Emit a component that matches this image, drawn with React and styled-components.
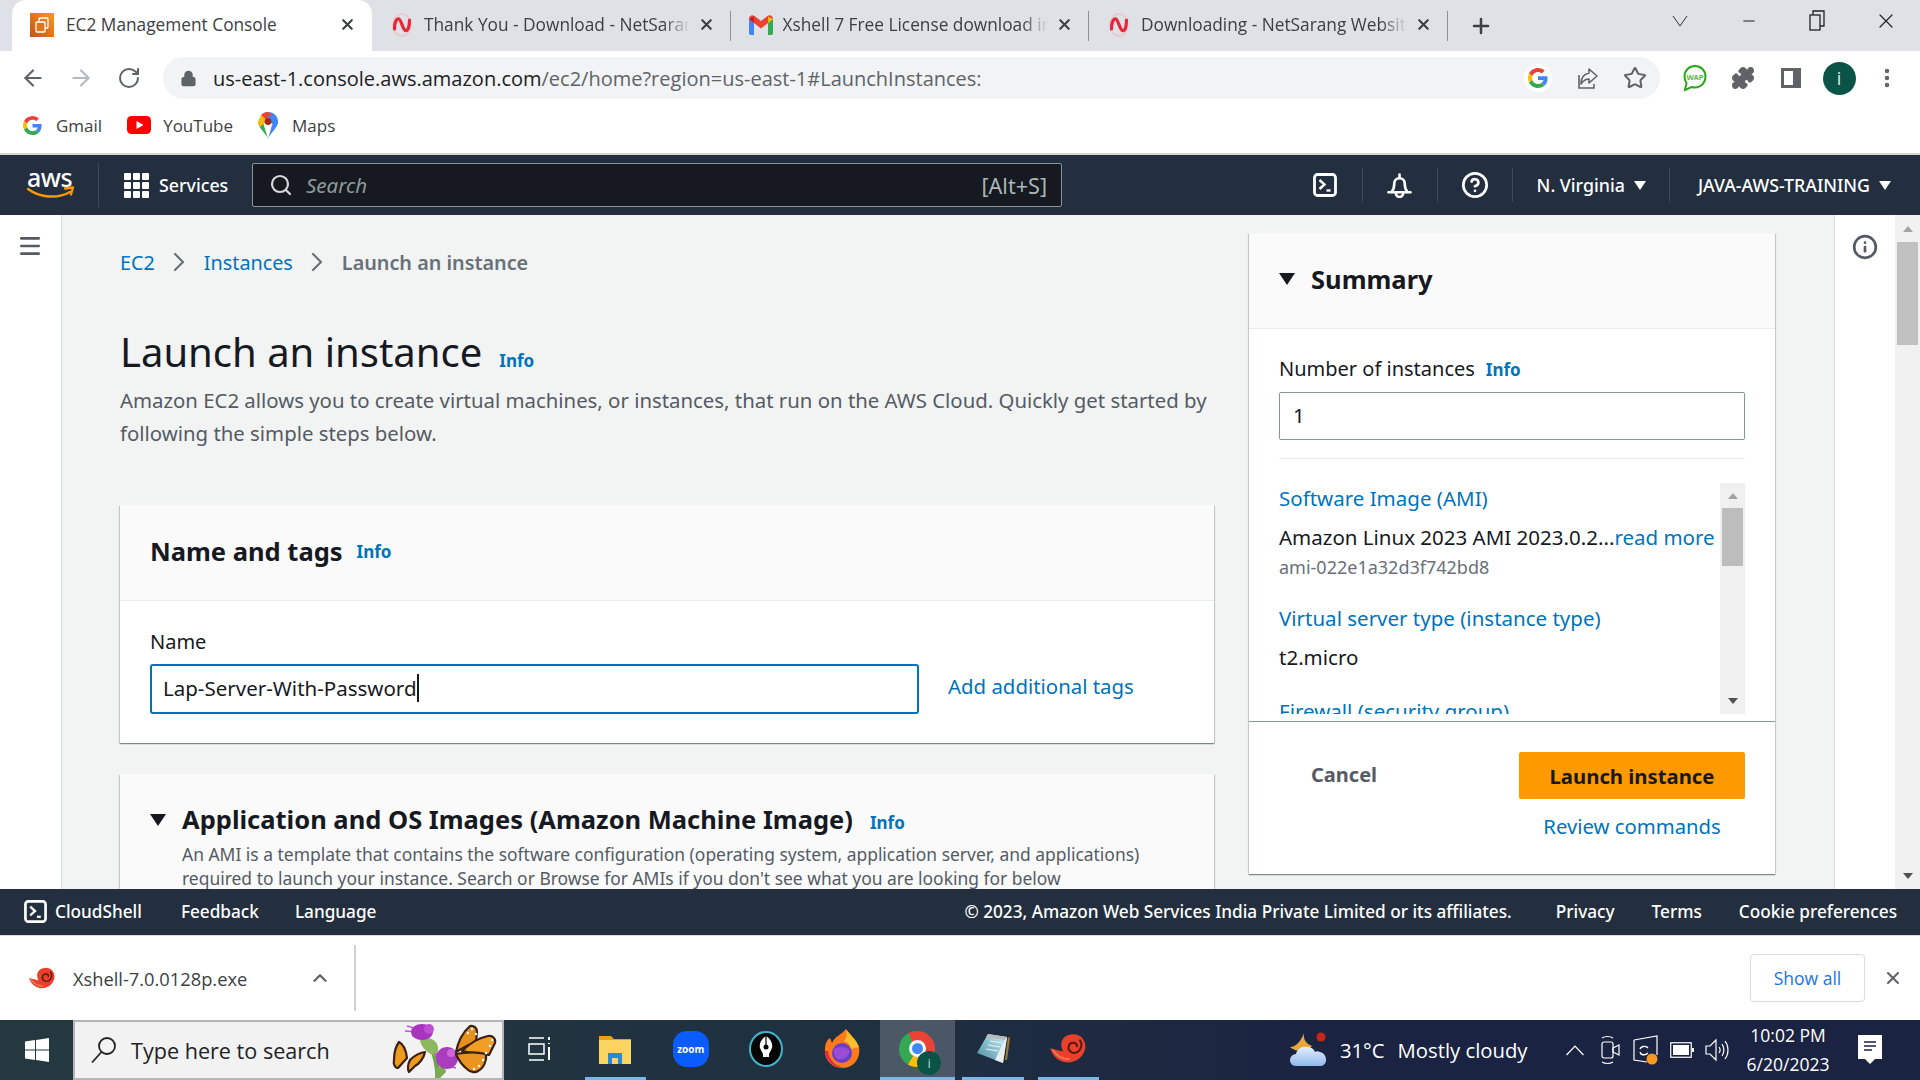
import React from 'react';
import styled, { createGlobalStyle } from 'styled-components';
import {
  ArrowLeft, ArrowRight, RotateCw, Lock, Star, Puzzle, MoreVertical, Search, X, Plus,
  ChevronUp, ChevronRight, Minus, Menu, Info as InfoIcon, HelpCircle,
} from 'lucide-react';

const GlobalStyle = createGlobalStyle`
  html, body { margin: 0; padding: 0; width: 1920px; height: 1080px; overflow: hidden; }
  * { box-sizing: border-box; }
  body { font-family: "Noto Sans", "Open Sans", sans-serif; }
`;

const chromeFont = `"Open Sans", "Noto Sans", sans-serif`;

const Page = styled.div`
  width: 1920px;
  height: 1080px;
  display: flex;
  flex-direction: column;
  overflow: hidden;
  background: #fff;
`;

/* browser chrome */
const TabStrip = styled.div`
  height: 51px;
  flex: none;
  background: #dee1e6;
  display: flex;
  align-items: flex-end;
  padding-left: 12px;
  font-family: ${chromeFont};
`;
const Tab = styled.div`
  width: ${(p) => (p.$active ? 360 : 358.5)}px;
  height: 51px;
  display: flex;
  align-items: center;
  gap: ${(p) => (p.$active ? 12 : 10)}px;
  padding: 0 16px 2px 18px;
  background: ${(p) => (p.$active ? '#fff' : 'transparent')};
  border-radius: ${(p) => (p.$active ? '14px 14px 0 0' : '0')};
  position: relative;
  color: #3c4043;
  &::after {
    content: '';
    display: ${(p) => (p.$sep ? 'block' : 'none')};
    position: absolute;
    right: 0;
    top: 11px;
    height: 30px;
    width: 1px;
    background: #8f9298;
  }
`;
const TabTitle = styled.div`
  flex: 1;
  min-width: 0;
  font-size: 17.3px;
  white-space: nowrap;
  overflow: hidden;
  margin-right: ${(p) => (p.$fade ? -2 : 0)}px;
  -webkit-mask-image: ${(p) => (p.$fade ? 'linear-gradient(to right, #000 90%, transparent)' : 'none')};
  mask-image: ${(p) => (p.$fade ? 'linear-gradient(to right, #000 90%, transparent)' : 'none')};
`;
const NewTab = styled.div`
  width: 66px;
  height: 51px;
  display: flex;
  align-items: center;
  justify-content: center;
  color: #3c4043;
`;
const WindowControls = styled.div`
  margin-left: auto;
  height: 51px;
  display: flex;
  align-items: center;
  padding: 0 0 10px;
  color: #202124;
`;
const WinButton = styled.div`
  width: 68.5px;
  display: flex;
  justify-content: center;
`;
const Toolbar = styled.div`
  height: 54px;
  flex: none;
  display: flex;
  align-items: center;
  padding-left: 9px;
  color: #5f6368;
  font-family: ${chromeFont};
`;
const ToolButton = styled.div`
  width: 48px;
  height: 30px;
  flex: none;
  display: flex;
  align-items: center;
  justify-content: center;
  color: ${(p) => (p.$off ? '#b8babd' : '#5f6368')};
`;
const Omnibox = styled.div`
  width: 1497px;
  height: 42px;
  margin: 0 0 0 10px;
  flex: none;
  background: #f1f3f4;
  border-radius: 21px;
  display: flex;
  align-items: center;
  padding: 0 0 0 17px;
  gap: 16px;
`;
const Url = styled.div`
  flex: 1;
  font-size: 20px;
  color: #5f6368;
  white-space: nowrap;
  b { font-weight: 400; color: #202124; }
`;
const OmniIcons = styled.div`
  display: flex;
  align-items: center;
  gap: 23.5px;
  padding-right: 13px;
`;
const GoogleDisc = styled.div`
  width: 28px;
  height: 28px;
  display: flex;
  align-items: center;
  justify-content: center;
  background: #fff;
  border-radius: 50%;
`;
const ExtIcons = styled.div`
  display: flex;
  align-items: center;
  gap: 0;
  margin-left: 11px;
`;
const ExtSlot = styled.div`
  width: 48px;
  display: flex;
  justify-content: center;
  align-items: center;
`;
const Avatar = styled.div`
  width: 33px;
  height: 33px;
  border-radius: 50%;
  background: #0a5447;
  color: #dfeeea;
  display: flex;
  align-items: center;
  justify-content: center;
  font-size: 18px;
`;
const Bookmarks = styled.div`
  height: 48px;
  flex: none;
  display: flex;
  align-items: center;
  padding: 0 0 8px 23px;
  gap: 25px;
  font-family: ${chromeFont};
`;
const Bookmark = styled.div`
  display: flex;
  align-items: center;
  gap: ${(p) => p.$gap || 14}px;
  font-size: 17px;
  color: #3c4043;
`;
const ChromeRule = styled.div`
  height: 2px;
  flex: none;
  background: #d4d4d4;
`;

/* aws nav */
const AwsNav = styled.div`
  height: 60px;
  flex: none;
  background: #232f3e;
  display: flex;
  align-items: center;
  color: #fff;
  font-size: 17.8px;
`;
const AwsLogo = styled.div`
  width: 99px;
  height: 44px;
  padding-left: 27px;
  border-right: 1px solid #3c4856;
  display: flex;
  flex-direction: column;
  justify-content: center;
`;
const AwsWord = styled.span`
  font-size: 25px;
  line-height: 20px;
  font-weight: 500;
  letter-spacing: -0.5px;
  margin-top: -4px;
`;
const ServicesBtn = styled.div`
  display: flex;
  align-items: center;
  gap: 10px;
  width: 153px;
  padding-left: 25px;
  font-weight: 500;
`;
const GridDots = styled.div`
  display: grid;
  grid-template-columns: repeat(3, 7px);
  grid-auto-rows: 7px;
  gap: 2px;
  i { background: #fff; border-radius: 1px; display: block; }
`;
const SearchBox = styled.div`
  width: 810px;
  height: 44px;
  background: #16191f;
  border: 1px solid #879596;
  border-radius: 2px;
  display: flex;
  align-items: center;
  padding: 0 14px 0 16px;
  gap: 13px;
  color: #d5dbdb;
`;
const SearchHint = styled.span`
  flex: 1;
  font-style: italic;
  font-size: 20.5px;
  color: #8d9a9e;
`;
const Shortcut = styled.span`
  font-size: 21.6px;
  color: #aab7b8;
`;
const NavRight = styled.div`
  margin-left: auto;
  display: flex;
  align-items: center;
  height: 44px;
  padding-right: 29px;
`;
const NavIcon = styled.div`
  width: 75px;
  height: 34px;
  display: flex;
  align-items: center;
  justify-content: center;
  border-right: 1px solid #3c4856;
`;
const NavMenu = styled.div`
  display: flex;
  align-items: center;
  height: 34px;
  gap: 9px;
  padding: 0 ${(p) => p.$right}px 0 ${(p) => p.$left}px;
  border-right: ${(p) => (p.$last ? '0' : '1px solid #3c4856')};
  font-weight: 500;
  white-space: nowrap;
`;
const Caret = styled.span`
  width: 0;
  height: 0;
  border-left: ${(p) => p.$size || 6}px solid transparent;
  border-right: ${(p) => p.$size || 6}px solid transparent;
  border-top: ${(p) => (p.$size || 6) * 1.5}px solid ${(p) => p.$color || '#fff'};
  flex: none;
`;

/* main console area */
const Main = styled.div`
  flex: 1;
  min-height: 0;
  display: flex;
  background: #f2f3f3;
  overflow: hidden;
`;
const SideRail = styled.div`
  width: 62px;
  flex: none;
  background: #fff;
  border-right: 1px solid #d5dbdb;
  padding: 18px 0 0 17px;
  color: #545b64;
`;
const Content = styled.div`
  width: 1152px;
  flex: none;
  padding: 33px 0 0 58px;
  color: #16191f;
`;
const Crumbs = styled.div`
  display: flex;
  align-items: center;
  height: 28px;
  font-size: 19.8px;
  color: #687078;
  a { color: #0073bb; }
  strong { font-weight: 600; color: #687078; }
`;
const CrumbGap = styled.span`
  width: 49px;
  display: flex;
  justify-content: center;
  color: #687078;
`;
const TitleRow = styled.div`
  display: flex;
  align-items: baseline;
  gap: 17px;
  margin-top: 47px;
`;
const PageTitle = styled.h1`
  margin: 0;
  font-size: 40px;
  line-height: 58px;
  font-weight: 400;
  color: #16191f;
`;
const InfoLink = styled.a`
  font-size: 17px;
  font-weight: 700;
  color: #0073bb;
`;
const Intro = styled.p`
  margin: 3px 0 0;
  width: 1100px;
  font-size: 20.38px;
  line-height: 33px;
  color: #545b64;
  white-space: pre-line;
`;
const Card = styled.section`
  width: 1094px;
  background: #fff;
  box-shadow: 0 1px 1px 0 rgba(0, 28, 36, 0.3), 1px 1px 1px 0 rgba(0, 28, 36, 0.15), -1px 1px 1px 0 rgba(0, 28, 36, 0.15);
  margin-top: ${(p) => p.$top}px;
`;
const CardHead = styled.header`
  background: #fafafa;
  border-bottom: ${(p) => (p.$flush ? '0' : '1px solid #eaeded')};
  padding: ${(p) => (p.$flush ? '26px 30px 0 30px' : '0 30px 3px')};
  height: ${(p) => (p.$flush ? 'auto' : '96px')};
  display: flex;
  align-items: ${(p) => (p.$flush ? 'flex-start' : 'center')};
  gap: ${(p) => (p.$flush ? 17 : 14)}px;
`;
const CardTitle = styled.h2`
  margin: 0;
  font-size: 25.5px;
  line-height: 38px;
  font-weight: 700;
  color: #16191f;
  white-space: nowrap;
`;
const TitleLine = styled.div`
  display: flex;
  align-items: baseline;
  gap: 17px;
`;
const Triangle = styled.div`
  padding-top: 26px;
  margin-right: -1px;
`;
const CardDesc = styled.p`
  margin: 4px 0 0;
  font-size: 17.45px;
  line-height: 24px;
  color: #545b64;
  white-space: pre;
`;
const CardBody = styled.div`
  padding: 27px 30px 29px;
`;
const FieldLabel = styled.label`
  display: block;
  font-size: 20px;
  line-height: 28px;
  color: #16191f;
`;
const NameRow = styled.div`
  display: flex;
  align-items: center;
  gap: 29px;
  margin-top: 8px;
`;
const NameInput = styled.div`
  width: 769px;
  height: 50px;
  border: 2.5px solid #0073bb;
  border-radius: 3px;
  display: flex;
  align-items: center;
  padding: 0 0 2px 11px;
  font-size: 20.5px;
  color: #16191f;
  background: #fff;
`;
const TextCaret = styled.span`
  width: 2px;
  height: 28px;
  background: #16191f;
`;
const TagsLink = styled.a`
  font-size: 20.4px;
  color: #0073bb;
  margin-top: -6px;
`;

/* summary */
const Summary = styled.aside`
  width: 526px;
  height: 641px;
  flex: none;
  margin: 18px 0 0 35px;
  background: #fff;
  box-shadow: 0 1px 1px 0 rgba(0, 28, 36, 0.3), 1px 1px 1px 0 rgba(0, 28, 36, 0.15), -1px 1px 1px 0 rgba(0, 28, 36, 0.15);
  display: flex;
  flex-direction: column;
  color: #16191f;
`;
const SummaryHead = styled.header`
  height: 96px;
  flex: none;
  background: #fafafa;
  border-bottom: 1px solid #eaeded;
  display: flex;
  align-items: center;
  gap: 16px;
  padding: 0 30px 3px;
`;
const SummaryBody = styled.div`
  padding: 26px 30px 0;
`;
const SummaryLabel = styled.div`
  display: flex;
  align-items: baseline;
  gap: 11px;
  font-size: 20px;
  line-height: 28px;
`;
const NumberInput = styled.div`
  height: 48px;
  border: 1px solid #879596;
  border-radius: 2px;
  margin-top: 8px;
  padding: 0 0 2px 13px;
  display: flex;
  align-items: center;
  font-size: 20.5px;
  color: #16191f;
`;
const Rule = styled.div`
  height: 1px;
  background: #eaeded;
  margin-top: 18px;
`;
const ScrollArea = styled.div`
  height: 231px;
  margin-top: 24px;
  display: flex;
  overflow: hidden;
`;
const ScrollText = styled.div`
  flex: 1;
  min-width: 0;
  overflow: hidden;
  font-size: 20px;
`;
const SummaryLink = styled.a`
  display: block;
  color: #0073bb;
  font-size: 20.5px;
  line-height: 30px;
`;
const SummaryLine = styled.div`
  font-size: 20.5px;
  line-height: 30px;
  margin-top: 9px;
  white-space: nowrap;
  a { color: #0073bb; }
`;
const SummaryId = styled.div`
  font-size: 18px;
  line-height: 24px;
  color: #687078;
  margin: 3px 0 24px;
`;
const MiniScroll = styled.div`
  width: 25px;
  flex: none;
  background: #f0f0f0;
  display: flex;
  flex-direction: column;
  align-items: center;
  padding-top: 10px;
`;
const MiniThumb = styled.div`
  width: 21px;
  height: 58px;
  background: #bdbdbd;
  margin-top: 9px;
`;
const ArrowUp = styled.span`
  width: 0;
  height: 0;
  border-left: 5px solid transparent;
  border-right: 5px solid transparent;
  border-bottom: 6px solid #a3a3a3;
`;
const ArrowDown = styled.span`
  width: 0;
  height: 0;
  border-left: 5px solid transparent;
  border-right: 5px solid transparent;
  border-top: 6px solid #505050;
  margin-top: auto;
  margin-bottom: 10px;
`;
const SummaryFoot = styled.div`
  border-top: 1px solid #879596;
  margin-top: 7px;
  padding: 30px 30px 0;
  display: grid;
  grid-template-columns: 1fr 226px;
  row-gap: 11px;
`;
const CancelBtn = styled.div`
  font-size: 20px;
  font-weight: 700;
  color: #545b64;
  padding-left: 32px;
  line-height: 45px;
`;
const LaunchBtn = styled.div`
  height: 47px;
  background: #ff9900;
  border-radius: 2px;
  font-size: 20.3px;
  font-weight: 700;
  color: #16191f;
  display: flex;
  align-items: center;
  justify-content: center;
`;
const ReviewLink = styled.a`
  grid-column: 2;
  text-align: center;
  color: #0073bb;
  font-size: 20.3px;
  line-height: 32px;
`;
const InfoRail = styled.div`
  width: 61px;
  flex: none;
  margin-left: 59px;
  background: #fff;
  border-left: 1px solid #d5dbdb;
  display: flex;
  justify-content: center;
  padding-top: 19px;
  color: #545b64;
`;
const PageScroll = styled.div`
  width: 25px;
  flex: none;
  background: #f1f1f1;
  display: flex;
  flex-direction: column;
  align-items: center;
  padding-top: 11px;
`;
const PageThumb = styled.div`
  width: 21px;
  height: 103px;
  background: #c1c1c1;
  margin-top: 10px;
`;

/* console footer */
const ConsoleFooter = styled.footer`
  height: 46px;
  flex: none;
  background: #232f3e;
  color: #fff;
  display: flex;
  align-items: center;
  font-size: 17.2px;
  font-weight: 500;
  padding: 0 23px 1px 24px;
  white-space: nowrap;
`;
const ShellLink = styled.span`
  display: flex;
  align-items: center;
  gap: 8px;
  margin-right: 39px;
`;
const FootLinks = styled.div`
  display: flex;
  gap: 36px;
`;
const FootRight = styled.div`
  margin-left: auto;
  display: flex;
  gap: 37px;
  span:first-child { margin-right: 7px; }
`;

/* downloads shelf */
const Shelf = styled.div`
  height: 85px;
  flex: none;
  background: #fff;
  display: flex;
  align-items: center;
  font-family: ${chromeFont};
  border-top: 1px solid #dadce0;
`;
const ShelfItem = styled.div`
  width: 356px;
  height: 66px;
  flex: none;
  display: flex;
  align-items: center;
  padding-left: 29px;
  gap: 18px;
  font-size: 18.3px;
  color: #3c4043;
  border-right: 2px solid #d0d0d0;
  span { flex: 1; }
  svg:last-child { margin-right: 23px; color: #5f6368; }
`;
const ShowAll = styled.div`
  margin-left: auto;
  width: 115px;
  height: 48px;
  border: 1px solid #dadce0;
  border-radius: 4px;
  display: flex;
  align-items: center;
  justify-content: center;
  font-size: 17.5px;
  color: #1a73e8;
`;
const ShelfClose = styled.div`
  width: 55px;
  display: flex;
  justify-content: center;
  color: #5f6368;
`;

/* windows taskbar */
const Taskbar = styled.div`
  height: 60px;
  flex: none;
  background: linear-gradient(90deg, #24393f 0%, #1f3040 45%, #1a2341 70%, #1a2341 100%);
  display: flex;
  align-items: stretch;
  color: #fff;
  font-family: ${chromeFont};
`;
const StartBtn = styled.div`
  width: 73px;
  display: flex;
  align-items: center;
  justify-content: center;
`;
const TaskSearch = styled.div`
  width: 431px;
  background: #f2f2f2;
  border: 2px solid #b5b5b5;
  display: flex;
  align-items: center;
  padding-left: 15px;
  gap: 13px;
  color: #222;
  font-size: 21.6px;
  span { flex: 1; white-space: nowrap; }
`;
const TaskIcons = styled.div`
  display: flex;
  margin-left: -2px;
`;
const TaskItem = styled.div`
  width: 75.5px;
  display: flex;
  align-items: center;
  justify-content: center;
  position: relative;
  padding-bottom: 3px;
  background: ${(p) => (p.$active ? 'rgba(255,255,255,0.2)' : 'transparent')};
  &::after {
    content: '';
    display: ${(p) => (p.$running ? 'block' : 'none')};
    position: absolute;
    left: ${(p) => (p.$active ? 0 : 7)}px;
    right: ${(p) => (p.$active ? 0 : 7)}px;
    bottom: 0;
    height: 3px;
    background: #76b9ed;
  }
`;
const ZoomBadge = styled.div`
  width: 36px;
  height: 36px;
  border-radius: 14px;
  background: #0b5cff;
  color: #fff;
  font-size: 10px;
  font-weight: 700;
  display: flex;
  align-items: center;
  justify-content: center;
`;
const ChromeLogo = styled.div`
  width: 36px;
  height: 36px;
  border-radius: 50%;
  background: conic-gradient(#ea4335 0 120deg, #fbbc05 120deg 210deg, #34a853 210deg 330deg, #ea4335 330deg);
  display: flex;
  align-items: center;
  justify-content: center;
  position: relative;
`;
const ChromeEye = styled.div`
  width: 17px;
  height: 17px;
  background: #4285f4;
  border: 3px solid #fff;
  border-radius: 50%;
`;
const ChromeUser = styled.div`
  position: absolute;
  right: -6px;
  bottom: -8px;
  width: 24px;
  height: 24px;
  border-radius: 50%;
  background: #0a5447;
  color: #b9d6cf;
  font-size: 13px;
  text-align: center;
  line-height: 24px;
`;
const Tray = styled.div`
  margin-left: auto;
  display: flex;
  align-items: center;
  padding-right: 21px;
`;
const Weather = styled.div`
  display: flex;
  align-items: center;
  font-size: 20.3px;
  margin-right: 30px;
  white-space: nowrap;
  svg { margin-right: 12px; }
  span + span { margin-left: 13px; }
`;
const TraySlot = styled.div`
  width: 35.5px;
  display: flex;
  justify-content: center;
`;
const Clock = styled.div`
  width: 106px;
  text-align: center;
  font-size: 17.5px;
  line-height: 29px;
`;
const Notify = styled.div`
  width: 58px;
  display: flex;
  justify-content: center;
`;

const GoogleG = ({ size = 20 }) => (
  <svg width={size} height={size} viewBox="0 0 48 48">
    <path fill="#EA4335" d="M24 9.5c3.54 0 6.71 1.22 9.21 3.6l6.85-6.85C35.9 2.38 30.47 0 24 0 14.62 0 6.51 5.38 2.56 13.22l7.98 6.19C12.43 13.72 17.74 9.5 24 9.5z" />
    <path fill="#4285F4" d="M46.98 24.55c0-1.57-.15-3.09-.38-4.55H24v9.02h12.94c-.58 2.96-2.26 5.48-4.78 7.18l7.73 6c4.51-4.18 7.09-10.36 7.09-17.65z" />
    <path fill="#FBBC05" d="M10.53 28.59c-.48-1.45-.76-2.99-.76-4.59s.27-3.14.76-4.59l-7.98-6.19C.92 16.46 0 20.12 0 24c0 3.88.92 7.54 2.56 10.78l7.97-6.19z" />
    <path fill="#34A853" d="M24 48c6.48 0 11.93-2.13 15.89-5.81l-7.73-6c-2.15 1.45-4.92 2.3-8.16 2.3-6.26 0-11.57-4.22-13.47-9.91l-7.98 6.19C6.51 42.62 14.62 48 24 48z" />
  </svg>
);

const Ec2Icon = () => (
  <svg width="24" height="24" viewBox="0 0 24 24" style={{ flex: 'none' }}>
    <defs>
      <linearGradient id="ec2g" x1="0" y1="1" x2="1" y2="0">
        <stop offset="0" stopColor="#c8511b" />
        <stop offset="1" stopColor="#f7981f" />
      </linearGradient>
    </defs>
    <rect width="24" height="24" fill="url(#ec2g)" />
    <rect x="9" y="5" width="9" height="10" rx="1" fill="none" stroke="#fff" strokeWidth="1.3" />
    <rect x="6" y="9" width="9" height="10" rx="1" fill="#e2741f" stroke="#fff" strokeWidth="1.3" />
  </svg>
);

const NetSarang = () => (
  <svg width="24" height="24" viewBox="0 0 24 24" style={{ flex: 'none' }}>
    <ellipse cx="12" cy="12" rx="9" ry="11" fill="none" stroke="#eec6cc" strokeWidth="1.5" />
    <path d="M4.500 16C4.500 8 7 5 9 6c2.500 1.500 3.500 10 6.500 11.500C18 18.500 19.500 14 19.500 7" fill="none" stroke="#e8283a" strokeWidth="3.200" strokeLinecap="round" />
  </svg>
);

const GmailIcon = () => (
  <svg width="24" height="20" viewBox="0 0 24 20" style={{ flex: 'none' }}>
    <path d="M0 4v14c0 1 .7 2 2 2h3V8z" fill="#4285f4" />
    <path d="M24 4v14c0 1-.7 2-2 2h-3V8z" fill="#34a853" />
    <path d="M0 4c0-3 3-5 5.500-3L12 6l6.500-5C21-1 24 1 24 4l-5 4-7 5.500L5 8z" fill="#ea4335" />
    <path d="M19 1.500 24 4l-5 4z" fill="#fbbc05" />
    <path d="M0 4l5 4V1.500z" fill="#c5221f" />
  </svg>
);

const YouTubeIcon = () => (
  <svg width="24" height="18" viewBox="0 0 24 18">
    <rect width="24" height="18" rx="4.500" fill="#f00" />
    <path d="M9.500 5v8l7-4z" fill="#fff" />
  </svg>
);

const MapsIcon = () => (
  <svg width="20" height="27" viewBox="0 0 20 27">
    <path d="M10 27C8 21 0 16 0 9.500L4 7z" fill="#34a853" />
    <path d="M10 27c2-6 10-11 10-17.500L14 13z" fill="#4285f4" />
    <path d="M16.500 2.200C18.800 4 20 6.500 20 9.500c0 2-1 3.800-2.500 5.700L4.500 2.700C6 1 8 0 10 0c2.600 0 4.700.8 6.500 2.200z" fill="#4285f4" />
    <path d="M3 3 0 9.500c0 2 .8 3.700 2 5.500l8-7z" fill="#fbbc05" />
    <path d="M10 0C7 0 4.800 1.200 3 3l4.500 4L14 2z" fill="#ea4335" />
    <circle cx="10" cy="9.500" r="3.400" fill="#a52714" />
  </svg>
);

const ShareIcon = () => (
  <svg width="24" height="24" viewBox="0 0 24 24" fill="none" stroke="#5f6368" strokeWidth="1.600">
    <path d="M3 9v13h15v-4" />
    <path d="M13 3l8 7-8 7v-4c-4 0-6 2-8 5 0-6 3-10 8-11z" strokeLinejoin="round" />
  </svg>
);

const WapIcon = () => (
  <svg width="24" height="28" viewBox="0 0 24 28">
    <path d="M12 2C6 2 1.500 6.500 1.500 12.500c0 2.500.7 4.500 2 6.500L2 26l6.500-3c1 .3 2.300.5 3.500.5 6 0 10.500-4.800 10.500-11S18 2 12 2z" fill="#fff" stroke="#2aa81a" strokeWidth="2" />
    <text x="12" y="15.500" textAnchor="middle" fontSize="7.500" fontWeight="700" fill="#5fb34f" fontFamily="Noto Sans, sans-serif">WAP</text>
  </svg>
);

const SidePanelIcon = () => (
  <svg width="22" height="22" viewBox="0 0 22 22">
    <path fillRule="evenodd" d="M1 1h20v20H1zM4 4h9v14H4z" fill="#5f6368" />
  </svg>
);

const SmileArrow = () => (
  <svg width="48" height="14" viewBox="0 0 48 14" fill="none" style={{ display: 'block', marginTop: -1 }}>
    <path d="M1 3c12 9 30 10 42 3" stroke="#ff9900" strokeWidth="2.500" strokeLinecap="round" />
    <path d="M38 2.500l8-1-2 7" stroke="#ff9900" strokeWidth="2.300" strokeLinecap="round" strokeLinejoin="round" />
  </svg>
);

const ShellIcon = ({ size = 24 }) => (
  <svg width={size} height={size} viewBox="0 0 24 24" fill="none" stroke="#fff">
    <rect x="1.500" y="1.500" width="21" height="21" rx="3" strokeWidth="2.800" />
    <path d="M6.500 7l5 4.500-5 4.500" strokeWidth="2.400" />
    <path d="M13.500 17.500h4" strokeWidth="2.400" />
  </svg>
);

const BellIcon = () => (
  <svg width="25" height="25" viewBox="0 0 24 24" fill="none" stroke="#fff" strokeWidth="2.500" strokeLinecap="round">
    <path d="M1.500 18.500h21" />
    <path d="M4.500 18c2-2.500 2.500-5 2.500-8a5 5 0 0 1 10 0c0 3 .5 5.500 2.500 8" />
    <path d="M8.500 19.500a3.500 3.500 0 0 0 7 0" />
    <path d="M12 1.500v3" />
  </svg>
);

const WindowsLogo = () => (
  <svg width="24" height="24" viewBox="0 0 24 24" fill="#fff">
    <path d="M0 3.500 10 2v9.500H0zM11 1.900 24 0v11.500H11zM0 12.500h10V22L0 20.500zM11 12.500h13V24l-13-1.900z" />
  </svg>
);

const Lens = () => (
  <svg width="28" height="28" viewBox="0 0 28 28" fill="none" stroke="#222" strokeWidth="1.800" style={{ flex: 'none' }}>
    <circle cx="17" cy="10" r="8" />
    <path d="M11.500 16 2 26.500" />
  </svg>
);

const Wing = ({ d, fill = '#ee9a1c' }) => (
  <path d={d} fill={fill} stroke="#3a2015" strokeWidth="2.200" strokeLinejoin="round" />
);

const Butterflies = () => (
  <svg width="120" height="56" viewBox="0 2 120 56" style={{ flex: 'none', marginRight: 2 }}>
    {/* thistle stems */}
    <path d="M52 28 C56 38 58 48 58 60" stroke="#6da24a" strokeWidth="5" fill="none" />
    <path d="M40 20c6-3 14-2 17 4 2 5 1 9-2 12-6-2-14-8-15-16z" fill="#8db85f" />
    <path d="M56 48c5-3 10 0 10 4l-6 6h-5z" fill="#7dab52" />
    {/* flower heads */}
    <path d="M25 11 L38 12 M27 6 L38 9 M32 16 L40 14 M60 44 L76 48 M54 34 L64 36 M56 42 L62 38" stroke="#c553d8" strokeWidth="1.500" />
    <ellipse cx="42" cy="12" rx="11" ry="8" fill="#a635bd" />
    <circle cx="49" cy="9" r="5" fill="#c04ed6" />
    <circle cx="67" cy="38" r="11" fill="#a93dbd" />
    <circle cx="71" cy="33" r="4" fill="#cf66e0" />
    {/* small butterfly */}
    <Wing d="M19 22c4 2 7 8 8 16l-9 10c-3 0-5-4-4-8 0-8 2-14 5-18z" />
    <Wing d="M30 40c3-3 9-7 15-8-1 6-6 12-10 14l-6 6c-2-4-1-8 1-12z" />
    {/* big butterfly */}
    <Wing d="M76 32c2-10 7-20 14-26 4-1 7 2 7 6l-1 10c-6 2-14 6-20 10z" fill="#e8901a" />
    <Wing d="M82 31c6-6 16-13 26-15 5-1 8 3 7 7l-6 12c-8-1-18-2-27-4z" fill="#f29e24" />
    <Wing d="M76 34c10-2 22-2 30 0 1 6-2 14-8 17-3 2-8 1-11-2-5-4-9-10-11-15z" fill="#ec9420" />
    <path d="M92 9h0M96 14h0M88 13h0M112 20h0M110 26h0M106 33h0M103 40h0M99 46h0M94 49h0" stroke="#fff" strokeWidth="2.500" strokeLinecap="round" />
  </svg>
);

const TaskView = () => (
  <svg width="24" height="28" viewBox="0 0 24 28" fill="none" stroke="#fff" strokeWidth="1.500">
    <path d="M1 3h15M1 25h15M1 9h15v10H1z" />
    <path d="M21 2v3M21 8v1M21 12v13" strokeWidth="2" />
  </svg>
);

const ExplorerIcon = () => (
  <svg width="32" height="30" viewBox="0 0 32 30">
    <path d="M0 2h12l3 3h17v5H0z" fill="#e4a11b" />
    <rect y="6" width="32" height="24" fill="#fcd462" />
    <path d="M9 30V19h14v11h-4v-6h-6v6z" fill="#2b88d8" />
  </svg>
);

const PenIcon = () => (
  <svg width="34" height="36" viewBox="0 0 34 36">
    <ellipse cx="17" cy="18" rx="16" ry="17" fill="#050505" stroke="#3fb5cc" strokeWidth="2" />
    <path d="M17 5c5 3 7 8 6 12l-3 6v3h-6v-3l-3-6c-1-4 1-9 6-12z" fill="#fff" />
    <circle cx="17" cy="16" r="2.500" fill="#050505" />
    <path d="M17 5v9" stroke="#050505" strokeWidth="1.200" />
  </svg>
);

const FirefoxIcon = () => (
  <svg width="36" height="40" viewBox="0 0 36 40">
    <path d="M22 0c3 5 10 10 13 18 2 12-6 21-17 21C8 39 0 31 1 20c0-5 2-9 5-11l2 5c3-7 9-8 14-14z" fill="#ff7a1a" />
    <path d="M22 0c3 5 10 10 13 18l-8 2c-1-4-2-6-7-8 3-3 3-8 2-12z" fill="#ffbd2e" />
    <circle cx="18" cy="24" r="10" fill="#6a3fc4" />
    <path d="M10 20c4-3 12-3 16 2-2 6-6 9-12 8-3-1-5-6-4-10z" fill="#9a4bd8" />
    <path d="M1 22c1 10 9 17 19 17-8-2-15-7-16-17z" fill="#e5234d" />
  </svg>
);

const NotepadIcon = () => (
  <svg width="34" height="32" viewBox="0 0 34 32">
    <defs>
      <linearGradient id="padg" x1="0" y1="1" x2="1" y2="0">
        <stop offset="0" stopColor="#3f8ba0" />
        <stop offset="1" stopColor="#d4eef5" />
      </linearGradient>
    </defs>
    <path d="M32 4l2 1-3 22-2 0z" fill="#a5782a" />
    <path d="M12 1l19 3-4 26L1 20z" fill="url(#padg)" />
    <path d="M12 1l19 3-1 3-20-3z" fill="#b8b8b8" />
    <path d="M27 10l4-6-4 26-8-3z" fill="#e8eef0" />
    <path d="M14 8l12 2M12 12l12 2M10 16l12 2" stroke="#e6f5f9" strokeWidth="1" />
  </svg>
);

const XshellIcon = ({ size = 36 }) => (
  <svg width={size} height={size * 0.85} viewBox="0 0 36 30" fill="none">
    <path d="M0 15c6 1 10 3 13 3C9 10 12 2 22 1c9-1 15 7 13 15-2 9-11 14-19 13C8 28 3 23 0 15z" fill="#e8402a" />
    <path d="M3 17c4 6 9 9 16 9" stroke="#f4735a" strokeWidth="2" strokeLinecap="round" />
    <path d="M27 13c0-4-6-5-8-1-2 5 3 9 8 7 4-2 6-8 3-12" stroke="#5a1610" strokeWidth="2" strokeLinecap="round" />
  </svg>
);

const WeatherIcon = () => (
  <svg width="38" height="36" viewBox="0 0 38 36">
    <defs>
      <linearGradient id="cloudg" x1="0" y1="0" x2="0" y2="1">
        <stop offset="0" stopColor="#e4eefb" />
        <stop offset="1" stopColor="#8fb9ee" />
      </linearGradient>
    </defs>
    <path d="M14 1c-1 6 2 11 8 13-4 5-12 6-17 4 0 0-4-2-5-3 6 0 11-6 14-14z" fill="#e9a63a" />
    <circle cx="31" cy="5" r="4.500" fill="#c9261a" />
    <path d="M6 34c-4 0-6-3-6-6s3-6 6-6c1-5 6-8 11-7 4 0 7 2 8 5 1-1 3-1 5 0 4 1 6 4 6 8s-3 6-6 6z" fill="url(#cloudg)" />
  </svg>
);

const TrayMeet = () => (
  <svg width="20" height="34" viewBox="0 0 20 34" fill="none" stroke="#fff" strokeWidth="1.200">
    <rect x="1" y="9" width="11" height="16" rx="2" />
    <path d="M12 15l6-3v10l-6-3zM1 5c3-2 8-2 11 0M1 29c3 2 8 2 11 0" />
  </svg>
);

const TrayUpdate = () => (
  <svg width="26" height="36" viewBox="0 0 26 36" fill="none" stroke="#fff" strokeWidth="1.200">
    <path d="M1 8l23-4v19M1 8v20l13 2" />
    <path d="M7 17c1-3 5-3 7-2l1 1M15 21c-2 2-5 2-7 1l-1-2" strokeWidth="1.400" />
    <circle cx="19" cy="27" r="5.500" fill="#f7981f" stroke="none" />
  </svg>
);

const TrayBattery = () => (
  <svg width="24" height="16" viewBox="0 0 24 16">
    <rect x="0.750" y="0.750" width="20.500" height="14.500" fill="none" stroke="#fff" strokeWidth="1.200" />
    <rect x="3" y="3" width="16" height="10" fill="#fff" />
    <rect x="22" y="6" width="2" height="4" fill="#fff" />
  </svg>
);

const TrayVolume = () => (
  <svg width="24" height="26" viewBox="0 0 24 26" fill="none" stroke="#fff" strokeWidth="1.200">
    <path d="M1 9h4l6-6v20l-6-6H1zM14 10c1.500 2 1.500 4 0 6M17 7c2.500 4 2.500 8 0 12M20 4c4 5 4 13 0 18" />
  </svg>
);

const TrayChevron = () => (
  <svg width="20" height="12" viewBox="0 0 20 12" fill="none" stroke="#fff" strokeWidth="1.200">
    <path d="M1.500 11 10 2l8.500 9" />
  </svg>
);

const ActionCenter = () => (
  <svg width="24" height="30" viewBox="0 0 24 30">
    <path d="M0 0h24v24h-7l-5 5-5-5H0z" fill="#fff" />
    <path d="M6 7h12M6 11h12M6 15h8" stroke="#1a2341" strokeWidth="1.500" />
  </svg>
);

const ThinChevron = () => (
  <svg width="20" height="14" viewBox="0 0 20 14" fill="none" stroke="#333" strokeWidth="1">
    <path d="M3 2l7 10 7-10" />
  </svg>
);

const RestoreIcon = () => (
  <svg width="16" height="22" viewBox="0 0 16 22" fill="none" stroke="#202124" strokeWidth="1.300">
    <rect x="1" y="5" width="10" height="15" />
    <path d="M4 5V1h11v15h-4" />
  </svg>
);

const tabs = [
  { title: 'Thank You - Download - NetSarang Website', icon: <NetSarang />, sep: true },
  { title: 'Xshell 7 Free License download instantly', icon: <GmailIcon />, sep: true },
  { title: 'Downloading - NetSarang Website', icon: <NetSarang />, sep: true },
];

const App = () => (
  <Page>
    <GlobalStyle />
    <TabStrip>
      <Tab $active>
        <Ec2Icon />
        <TabTitle>EC2 Management Console</TabTitle>
        <X size={17} strokeWidth={3} />
      </Tab>
      {tabs.map((t) => (
        <Tab key={t.title} $sep={t.sep}>
          {t.icon}
          <TabTitle $fade>{t.title}</TabTitle>
          <X size={17} strokeWidth={3} />
        </Tab>
      ))}
      <NewTab><Plus size={24} strokeWidth={2.5} /></NewTab>
      <WindowControls>
        <WinButton><ThinChevron /></WinButton>
        <WinButton><Minus size={18} strokeWidth={1.500} /></WinButton>
        <WinButton><RestoreIcon /></WinButton>
        <WinButton><X size={24} strokeWidth={1.200} /></WinButton>
      </WindowControls>
    </TabStrip>

    <Toolbar>
      <ToolButton><ArrowLeft size={26} strokeWidth={2} /></ToolButton>
      <ToolButton $off><ArrowRight size={26} strokeWidth={2} /></ToolButton>
      <ToolButton><RotateCw size={24} strokeWidth={2} /></ToolButton>
      <Omnibox>
        <Lock size={17} fill="#5f6368" strokeWidth={2} />
        <Url><b>us-east-1.console.aws.amazon.com</b>/ec2/home?region=us-east-1#LaunchInstances:</Url>
        <OmniIcons>
          <GoogleDisc><GoogleG size={20} /></GoogleDisc>
          <ShareIcon />
          <Star size={24} strokeWidth={2} />
        </OmniIcons>
      </Omnibox>
      <ExtIcons>
        <ExtSlot><WapIcon /></ExtSlot>
        <ExtSlot><Puzzle size={24} fill="#5f6368" /></ExtSlot>
        <ExtSlot><SidePanelIcon /></ExtSlot>
        <ExtSlot><Avatar>i</Avatar></ExtSlot>
        <ExtSlot><MoreVertical size={24} strokeWidth={2.500} /></ExtSlot>
      </ExtIcons>
    </Toolbar>

    <Bookmarks>
      <Bookmark><GoogleG size={19} />Gmail</Bookmark>
      <Bookmark $gap={12}><YouTubeIcon />YouTube</Bookmark>
      <Bookmark><MapsIcon />Maps</Bookmark>
    </Bookmarks>
    <ChromeRule />

    <AwsNav>
      <AwsLogo>
        <AwsWord>aws</AwsWord>
        <SmileArrow />
      </AwsLogo>
      <ServicesBtn>
        <GridDots>{Array.from({ length: 9 }, (_, i) => <i key={i} />)}</GridDots>
        Services
      </ServicesBtn>
      <SearchBox>
        <Search size={24} strokeWidth={2.200} />
        <SearchHint>Search</SearchHint>
        <Shortcut>[Alt+S]</Shortcut>
      </SearchBox>
      <NavRight>
        <NavIcon><ShellIcon /></NavIcon>
        <NavIcon><BellIcon /></NavIcon>
        <NavIcon><HelpCircle size={28} strokeWidth={2.300} /></NavIcon>
        <NavMenu $left={24} $right={23}>N. Virginia<Caret /></NavMenu>
        <NavMenu $left={28} $right={0} $last>JAVA-AWS-TRAINING<Caret /></NavMenu>
      </NavRight>
    </AwsNav>

    <Main>
      <SideRail><Menu size={26} strokeWidth={2.500} /></SideRail>
      <Content>
        <Crumbs>
          <a>EC2</a>
          <CrumbGap><ChevronRight size={32} strokeWidth={1.600} /></CrumbGap>
          <a>Instances</a>
          <CrumbGap><ChevronRight size={32} strokeWidth={1.600} /></CrumbGap>
          <strong>Launch an instance</strong>
        </Crumbs>
        <TitleRow>
          <PageTitle>Launch an instance</PageTitle>
          <InfoLink>Info</InfoLink>
        </TitleRow>
        <Intro>{'Amazon EC2 allows you to create virtual machines, or instances, that run on the AWS Cloud. Quickly get started by\nfollowing the simple steps below.'}</Intro>

        <Card $top={55}>
          <CardHead>
            <CardTitle>Name and tags</CardTitle>
            <InfoLink>Info</InfoLink>
          </CardHead>
          <CardBody>
            <FieldLabel>Name</FieldLabel>
            <NameRow>
              <NameInput>Lap-Server-With-Password<TextCaret /></NameInput>
              <TagsLink>Add additional tags</TagsLink>
            </NameRow>
          </CardBody>
        </Card>

        <Card $top={31}>
          <CardHead $flush>
            <Triangle><Caret $size={8} $color="#16191f" /></Triangle>
            <div>
              <TitleLine>
                <CardTitle>Application and OS Images (Amazon Machine Image)</CardTitle>
                <InfoLink>Info</InfoLink>
              </TitleLine>
              <CardDesc>{"An AMI is a template that contains the software configuration (operating system, application server, and applications)\nrequired to launch your instance. Search or Browse for AMIs if you don't see what you are looking for below"}</CardDesc>
            </div>
          </CardHead>
        </Card>
      </Content>

      <Summary>
        <SummaryHead>
          <Caret $size={8} $color="#16191f" />
          <CardTitle>Summary</CardTitle>
        </SummaryHead>
        <SummaryBody>
          <SummaryLabel>Number of instances <InfoLink>Info</InfoLink></SummaryLabel>
          <NumberInput>1</NumberInput>
          <Rule />
          <ScrollArea>
            <ScrollText>
              <SummaryLink>Software Image (AMI)</SummaryLink>
              <SummaryLine>Amazon Linux 2023 AMI 2023.0.2...<a>read more</a></SummaryLine>
              <SummaryId>ami-022e1a32d3f742bd8</SummaryId>
              <SummaryLink>Virtual server type (instance type)</SummaryLink>
              <SummaryLine>t2.micro</SummaryLine>
              <SummaryId />
              <SummaryLink>Firewall (security group)</SummaryLink>
            </ScrollText>
            <MiniScroll>
              <ArrowUp />
              <MiniThumb />
              <ArrowDown />
            </MiniScroll>
          </ScrollArea>
        </SummaryBody>
        <SummaryFoot>
          <CancelBtn>Cancel</CancelBtn>
          <LaunchBtn>Launch instance</LaunchBtn>
          <ReviewLink>Review commands</ReviewLink>
        </SummaryFoot>
      </Summary>

      <InfoRail><InfoIcon size={26} strokeWidth={2.500} /></InfoRail>
      <PageScroll>
        <ArrowUp />
        <PageThumb />
        <ArrowDown />
      </PageScroll>
    </Main>

    <ConsoleFooter>
      <ShellLink><ShellIcon size={23} />CloudShell</ShellLink>
      <FootLinks>
        <span>Feedback</span>
        <span>Language</span>
      </FootLinks>
      <FootRight>
        <span>© 2023, Amazon Web Services India Private Limited or its affiliates.</span>
        <span>Privacy</span>
        <span>Terms</span>
        <span>Cookie preferences</span>
      </FootRight>
    </ConsoleFooter>

    <Shelf>
      <ShelfItem>
        <XshellIcon size={26} />
        <span>Xshell-7.0.0128p.exe</span>
        <ChevronUp size={22} strokeWidth={2.500} />
      </ShelfItem>
      <ShowAll>Show all</ShowAll>
      <ShelfClose><X size={20} strokeWidth={2.500} /></ShelfClose>
    </Shelf>

    <Taskbar>
      <StartBtn><WindowsLogo /></StartBtn>
      <TaskSearch>
        <Lens />
        <span>Type here to search</span>
        <Butterflies />
      </TaskSearch>
      <TaskIcons>
        <TaskItem><TaskView /></TaskItem>
        <TaskItem $running><ExplorerIcon /></TaskItem>
        <TaskItem><ZoomBadge>zoom</ZoomBadge></TaskItem>
        <TaskItem><PenIcon /></TaskItem>
        <TaskItem><FirefoxIcon /></TaskItem>
        <TaskItem $active $running>
          <ChromeLogo><ChromeEye /><ChromeUser>i</ChromeUser></ChromeLogo>
        </TaskItem>
        <TaskItem $running><NotepadIcon /></TaskItem>
        <TaskItem $running><XshellIcon /></TaskItem>
      </TaskIcons>
      <Tray>
        <Weather>
          <WeatherIcon />
          <span>31°C</span>
          <span>Mostly cloudy</span>
        </Weather>
        <TraySlot><TrayChevron /></TraySlot>
        <TraySlot><TrayMeet /></TraySlot>
        <TraySlot><TrayUpdate /></TraySlot>
        <TraySlot><TrayBattery /></TraySlot>
        <TraySlot><TrayVolume /></TraySlot>
        <Clock>10:02 PM<br />6/20/2023</Clock>
        <Notify><ActionCenter /></Notify>
      </Tray>
    </Taskbar>
  </Page>
);

export default App;
